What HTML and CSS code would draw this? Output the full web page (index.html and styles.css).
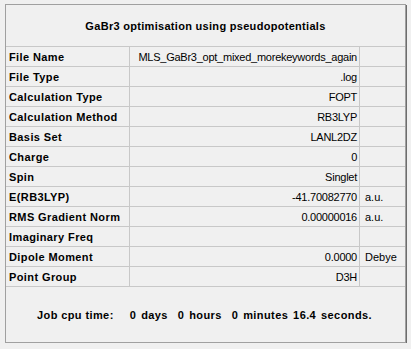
FILE: index.html
```html
<!DOCTYPE html>
<html lang="en">
<head>
  <meta charset="UTF-8">
  <meta name="viewport" content="width=device-width, initial-scale=1.0">
  <title>GaBr3 optimisation</title>
  <link rel="stylesheet" href="styles.css">
</head>
<body>
  <div class="panel">
    <div class="title">GaBr3 optimisation using pseudopotentials</div>

    <div class="grid">
      <div class="label">File Name</div><div class="value">MLS_GaBr3_opt_mixed_morekeywords_again</div><div class="unit"></div>
      <div class="label">File Type</div><div class="value">.log</div><div class="unit"></div>
      <div class="label">Calculation Type</div><div class="value">FOPT</div><div class="unit"></div>
      <div class="label">Calculation Method</div><div class="value">RB3LYP</div><div class="unit"></div>
      <div class="label">Basis Set</div><div class="value">LANL2DZ</div><div class="unit"></div>
      <div class="label">Charge</div><div class="value">0</div><div class="unit"></div>
      <div class="label">Spin</div><div class="value">Singlet</div><div class="unit"></div>
      <div class="label">E(RB3LYP)</div><div class="value">-41.70082770</div><div class="unit">a.u.</div>
      <div class="label">RMS Gradient Norm</div><div class="value">0.00000016</div><div class="unit">a.u.</div>
      <div class="label">Imaginary Freq</div><div class="value"></div><div class="unit"></div>
      <div class="label">Dipole Moment</div><div class="value">0.0000</div><div class="unit">Debye</div>
      <div class="label">Point Group</div><div class="value">D3H</div><div class="unit"></div>
    </div>

    <!-- total cpu time line -->
    <div class="job">
      <span class="job-label">Job cpu time:</span>
      <span class="job-time">0 days  0 hours  0 minutes 16.4 seconds.</span>
    </div>
  </div>
</body>
</html>
```

FILE: styles.css
```css
/* Windows style summary panel */
body {
  margin: 4px 0 0 5px;
  background-color: #f0f0f0;
  font-family: 'Liberation Sans', Arial, sans-serif;
  font-size: 11px;
  color: #000;
}

.panel {
  width: 399px;
  height: 337px;
  border: 1px solid #a0a0a0;
  box-shadow: 1px 1px 0 #6d6d6d;
  display: flex;
  flex-direction: column;
}

.title {
  height: 41px;
  border-bottom: 1px solid #c8c8c8;
  display: flex;
  align-items: center;
  justify-content: center;
  font-weight: bold;
  letter-spacing: 0.3px;
}

.grid {
  display: grid;
  grid-template-columns: 124px 230px 45px;
  grid-auto-rows: 20px;
}

.grid > div {
  border-bottom: 1px solid #c8c8c8;
  display: flex;
  align-items: center;
  white-space: nowrap;
}

.label {
  border-right: 1px solid #c8c8c8;
  padding-left: 3px;
  font-weight: bold;
  letter-spacing: 0.4px;
}

.value {
  border-right: 1px solid #c8c8c8;
  justify-content: flex-end;
  padding-right: 2px;
  letter-spacing: -0.25px;
}

.unit {
  padding-left: 5px;
}

.job {
  flex: 1;
  display: flex;
  align-items: center;
  font-weight: bold;
  white-space: pre;
  padding-left: 31px;
  letter-spacing: 0.4px;
}

.job-time {
  margin-left: 16px;
  word-spacing: 1.5px;
}
```
